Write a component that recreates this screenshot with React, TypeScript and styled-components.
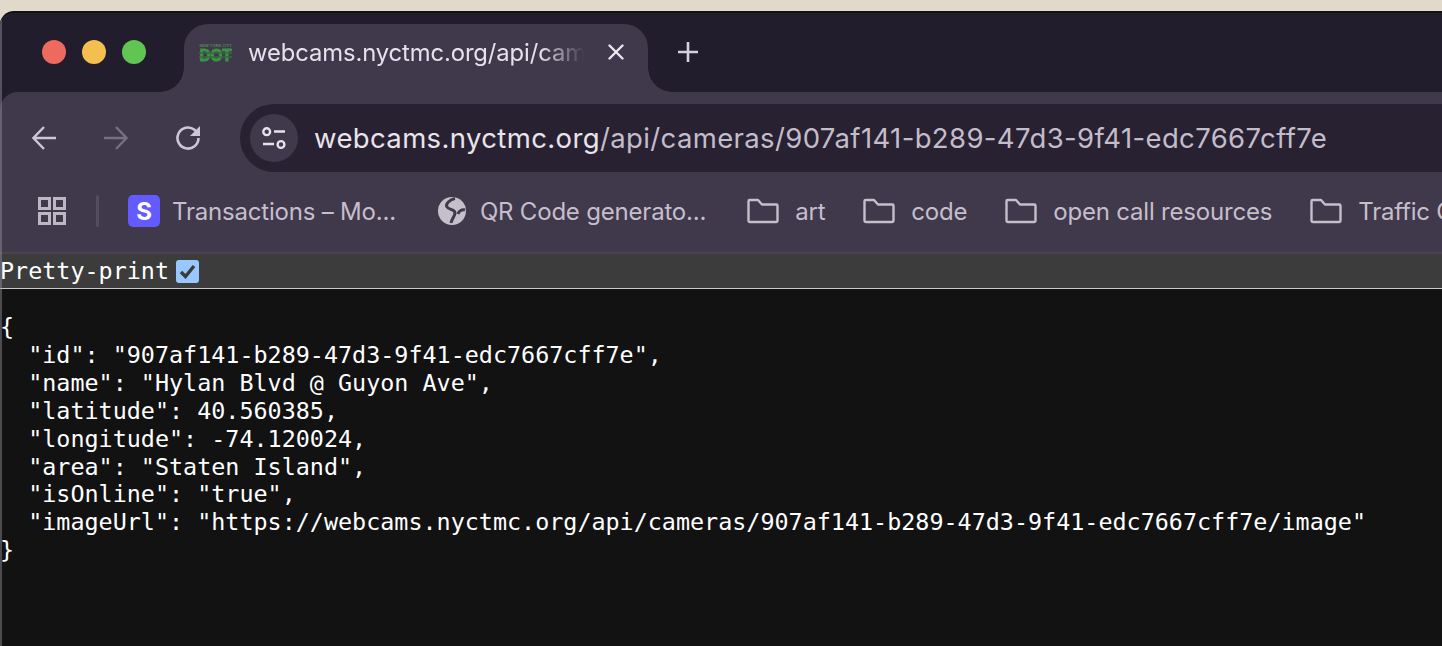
import React from 'react';
import styled, { createGlobalStyle } from 'styled-components';

const GlobalStyle = createGlobalStyle`
  html, body {
    margin: 0;
    padding: 0;
    background: #e0d9cc;
    overflow: hidden;
  }
  * {
    box-sizing: border-box;
  }
  svg {
    flex-shrink: 0;
  }
`

const Desktop = styled.div`
  width: 1442px;
  height: 646px;
  padding-top: 11px;
  background: #e0d9cc;
  overflow: hidden;
`

const Window = styled.div`
  position: relative;
  height: 640px;
  display: flex;
  flex-direction: column;
  background: #221d2c;
  border-top: 2px solid #111;
  border-top-left-radius: 14px;
  overflow: hidden;

  &:after {
    content: "";
    position: absolute;
    top: 0;
    bottom: 0;
    left: 0;
    width: 2px;
    background: rgba(150, 147, 155, 0.45);
    border-top-left-radius: 14px;
  }
`

const TabStrip = styled.div`
  height: 79px;
  padding-top: 11px;
  display: flex;
  align-items: flex-start;
  background: #221d2c;
`

const Lights = styled.div`
  width: 184px;
  height: 57px;
  padding: 16px 0 0 42px;
  display: flex;
  gap: 16px;
`

const Light = styled.span<{ color: string }>`
  width: 24px;
  height: 24px;
  border-radius: 50%;
  background: ${(props) => props.color};
`

const Tab = styled.div`
  position: relative;
  width: 464px;
  height: 68px;
  padding: 0 24px 12px 15px;
  display: flex;
  align-items: center;
  background: #40384b;
  border-radius: 24px 24px 0 0;

  &:before, &:after {
    content: "";
    position: absolute;
    bottom: 0;
    width: 24px;
    height: 24px;
  }
  &:before {
    left: -24px;
    background: radial-gradient(circle at 0 0, transparent 23.5px, #40384b 24px);
  }
  &:after {
    right: -24px;
    background: radial-gradient(circle at 100% 0, transparent 23.5px, #40384b 24px);
  }
`

const TabTitle = styled.span`
  flex: 1;
  margin: 0 24px 0 16px;
  overflow: hidden;
  white-space: nowrap;
  font: 400 23.8px "Inter", sans-serif;
  letter-spacing: -0.1px;
  color: #e6e1ea;
  -webkit-mask-image: linear-gradient(to right, #000 87%, transparent 100%);
  mask-image: linear-gradient(to right, #000 87%, transparent 100%);
`

const NewTab = styled.div`
  margin: 16px 0 0 28px;
  width: 24px;
  height: 24px;
  color: #d6cfe0;
`

const Toolbar = styled.div`
  height: 80px;
  padding: 12px 0 0 32px;
  display: flex;
  background: #40384b;
  border-top-left-radius: 18px;
`

const NavButton = styled.div<{ dim?: boolean }>`
  width: 24px;
  height: 68px;
  margin-right: 48px;
  display: flex;
  align-items: center;
  color: ${(props) => (props.dim ? '#77707f' : '#cdc6d6')};
`

const AddressBar = styled.div`
  flex: 1;
  height: 68px;
  margin-left: -8px;
  margin-right: -40px;
  padding-left: 10px;
  display: flex;
  align-items: center;
  background: #282132;
  border-radius: 34px;
`

const SiteBadge = styled.div`
  width: 48px;
  height: 48px;
  display: flex;
  align-items: center;
  justify-content: center;
  border-radius: 50%;
  background: #40384b;
  color: #e6e1ea;
`

const Url = styled.div`
  margin-left: 16px;
  white-space: nowrap;
  font: 400 27.5px "Inter", sans-serif;
  letter-spacing: 0.37px;
  color: #c3bdc9;

  b {
    font-weight: 400;
    color: #e8e4ec;
  }
`

const BookmarkBar = styled.div`
  height: 82px;
  padding: 0 0 2px 38px;
  display: flex;
  align-items: center;
  background: #40384b;
  border-bottom: 2px solid #48434f;
  white-space: nowrap;
  overflow: hidden;
`

const Separator = styled.span`
  width: 3px;
  height: 32px;
  flex-shrink: 0;
  margin: 0 29px 0 30px;
  border-radius: 2px;
  background: #544d5e;
`

const Bookmark = styled.div<{ gap: number }>`
  display: flex;
  align-items: center;
  flex-shrink: 0;
  margin-right: ${(props) => props.gap}px;
  font: 400 24px "Inter", sans-serif;
  letter-spacing: -0.2px;
  color: #c5bfcb;
`

const BookmarkLabel = styled.span<{ gap: number }>`
  margin-left: ${(props) => props.gap}px;
`

const StripeBadge = styled.span`
  width: 32px;
  height: 32px;
  display: flex;
  align-items: center;
  justify-content: center;
  border-radius: 5px;
  background: #635bff;
  color: #fff;
  font: 700 24px "Inter", sans-serif;
`

const PrettyBar = styled.div`
  height: 35px;
  display: flex;
  align-items: center;
  gap: 7px;
  background: #3c3c3c;
  border-bottom: 1px solid #c8c8c8;
  font: 400 23.4px "DejaVu Sans Mono", monospace;
  color: #fff;
`

const CheckBox = styled.span`
  width: 23px;
  height: 23px;
  display: flex;
  align-items: center;
  justify-content: center;
  border-radius: 3px;
  background: #99c8ff;
  color: #3b3b3b;
`

const JsonBody = styled.pre`
  flex: 1;
  margin: 0;
  padding-top: 25px;
  background: #121212;
  font: 400 23.4px/27.9px "DejaVu Sans Mono", monospace;
  color: #fff;
`

const FolderIcon = () => (
  <svg width="32" height="26" viewBox="0 0 32 26" fill="none" stroke="currentColor" strokeWidth="2.4" strokeLinejoin="round">
    <path d="M1.5 3.2C1.5 2.5 2 2 2.7 2H11L15 6.5H29.3C30 6.5 30.5 7 30.5 7.7V22.8C30.5 23.5 30 24 29.3 24H2.7C2 24 1.5 23.5 1.5 22.8Z" />
  </svg>
)

const json = `{
  "id": "907af141-b289-47d3-9f41-edc7667cff7e",
  "name": "Hylan Blvd @ Guyon Ave",
  "latitude": 40.560385,
  "longitude": -74.120024,
  "area": "Staten Island",
  "isOnline": "true",
  "imageUrl": "https://webcams.nyctmc.org/api/cameras/907af141-b289-47d3-9f41-edc7667cff7e/image"
}`

const App = () => {
  return (
    <Desktop>
      <GlobalStyle />
      <Window>
        <TabStrip>
          <Lights>
            <Light color="#ee6a5f" />
            <Light color="#f5bf4f" />
            <Light color="#61c554" />
          </Lights>
          <Tab>
            <svg width="33" height="20" viewBox="0 0 33 20">
              <text x="16.5" y="5" textAnchor="middle" fontFamily="Liberation Sans" fontWeight="700" fontSize="4" fill="#4f8a55">NEW YORK CITY</text>
              <text x="16.5" y="18.5" textAnchor="middle" fontFamily="Liberation Sans" fontWeight="700" fontSize="16" textLength="32" lengthAdjust="spacingAndGlyphs" fill="#3f9048" stroke="#3f9048" strokeWidth="1">DOT</text>
              <path d="M0 11H33" stroke="#356a3e" strokeWidth="1.5" />
              <path d="M0 15H33" stroke="#356a3e" strokeWidth="1.5" />
            </svg>
            <TabTitle>webcams.nyctmc.org/api/cameras/907af141</TabTitle>
            <svg width="16" height="16" viewBox="0 0 16 16" stroke="#ebe7ef" strokeWidth="2.4" strokeLinecap="round">
              <path d="M1.5 1.5L14.5 14.5M14.5 1.5L1.5 14.5" />
            </svg>
          </Tab>
          <NewTab>
            <svg width="24" height="24" viewBox="0 0 24 24" stroke="currentColor" strokeWidth="2.6">
              <path d="M12 2V22M2 12H22" />
            </svg>
          </NewTab>
        </TabStrip>
        <Toolbar>
          <NavButton>
            <svg width="24" height="24" viewBox="0 0 24 24" fill="none" stroke="currentColor" strokeWidth="2.4">
              <path d="M24 12H2M12 1L1.5 12L12 23" />
            </svg>
          </NavButton>
          <NavButton dim>
            <svg width="24" height="24" viewBox="0 0 24 24" fill="none" stroke="currentColor" strokeWidth="2.4">
              <path d="M0 12H22M12 1L22.5 12L12 23" />
            </svg>
          </NavButton>
          <NavButton>
            <svg width="24" height="24" viewBox="0 0 24 24" fill="none" stroke="currentColor" strokeWidth="2.6">
              <path d="M22.5 12A10.5 10.5 0 1 1 18.5 3.8L22 7" />
              <path d="M24 0V10H14Z" fill="currentColor" stroke="none" />
            </svg>
          </NavButton>
          <AddressBar>
            <SiteBadge>
              <svg width="26" height="24" viewBox="0 0 26 24" fill="none" stroke="currentColor" strokeWidth="2.4">
                <circle cx="5.7" cy="5.7" r="3.4" />
                <path d="M13 5.5H24M2 18H13" />
                <circle cx="20" cy="18.5" r="3.4" />
              </svg>
            </SiteBadge>
            <Url><b>webcams.nyctmc.org</b>/api/cameras/907af141-b289-47d3-9f41-edc7667cff7e</Url>
          </AddressBar>
        </Toolbar>
        <BookmarkBar>
          <svg width="28" height="28" viewBox="0 0 28 28" fill="none" stroke="#bdb7c4" strokeWidth="3">
            <path d="M1.5 1.5H11.5V11.5H1.5ZM16.5 1.5H26.5V11.5H16.5ZM1.5 16.5H11.5V26.5H1.5ZM16.5 16.5H26.5V26.5H16.5Z" />
          </svg>
          <Separator />
          <Bookmark gap={42}>
            <StripeBadge>S</StripeBadge>
            <BookmarkLabel gap={12}>Transactions – Mo...</BookmarkLabel>
          </Bookmark>
          <Bookmark gap={41}>
            <svg width="28" height="28" viewBox="0 0 28 28">
              <circle cx="14" cy="14" r="14" fill="#c5bfcb" />
              <path d="M17 1.5C12 2.5 7 7 9 10C11 13 17 12 17 16C17 19 14 21 13 26M27 13C24 12 21 14 20 17" fill="none" stroke="#40384b" strokeWidth="3" />
            </svg>
            <BookmarkLabel gap={14}>QR Code generato...</BookmarkLabel>
          </Bookmark>
          <Bookmark gap={38}>
            <FolderIcon />
            <BookmarkLabel gap={16}>art</BookmarkLabel>
          </Bookmark>
          <Bookmark gap={38}>
            <FolderIcon />
            <BookmarkLabel gap={16}>code</BookmarkLabel>
          </Bookmark>
          <Bookmark gap={38}>
            <FolderIcon />
            <BookmarkLabel gap={16}>open call resources</BookmarkLabel>
          </Bookmark>
          <Bookmark gap={0}>
            <FolderIcon />
            <BookmarkLabel gap={16}>Traffic Cams</BookmarkLabel>
          </Bookmark>
        </BookmarkBar>
        <PrettyBar>
          Pretty-print
          <CheckBox>
            <svg width="17" height="15" viewBox="0 0 17 15" fill="none" stroke="currentColor" strokeWidth="3.4">
              <path d="M2 8L6.5 12.5L15 2" />
            </svg>
          </CheckBox>
        </PrettyBar>
        <JsonBody>{json}</JsonBody>
      </Window>
    </Desktop>
  )
}

export default App
